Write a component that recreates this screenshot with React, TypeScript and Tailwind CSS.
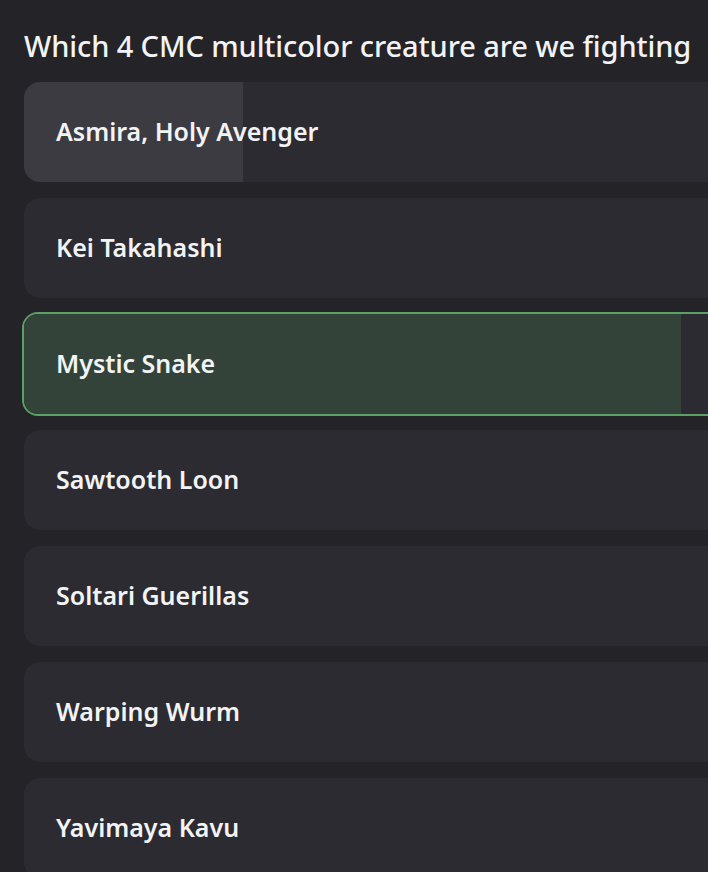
const options = [
  { name: "Asmira, Holy Avenger", fill: 219, selected: false },
  { name: "Kei Takahashi", fill: 0, selected: false },
  { name: "Mystic Snake", fill: 657, selected: true },
  { name: "Sawtooth Loon", fill: 0, selected: false },
  { name: "Soltari Guerillas", fill: 0, selected: false },
  { name: "Warping Wurm", fill: 0, selected: false },
  { name: "Yavimaya Kavu", fill: 0, selected: false },
];

export default function App() {
  return (
    <div className="w-[708px] h-[872px] overflow-hidden bg-[#232328] pl-6 pt-[26px]" style={{ fontFamily: '"Noto Sans", "Open Sans", sans-serif' }}>
      <h1 className="text-[29px] leading-[40px] font-medium text-[#f2f3f5] tracking-[-0.1px] whitespace-nowrap mb-4">
        Which 4 CMC multicolor creature are we fighting
      </h1>

      <div className="flex flex-col gap-4 w-[760px]">
        {options.map((o) => (
          <div
            key={o.name}
            className={`relative rounded-2xl overflow-hidden bg-[#2b2b31] ${o.selected ? "h-[104px] -my-[2px] -ml-[2px] border-2 border-[#5ba065]" : "h-[100px]"}`}
          >
            {o.fill > 0 && (
              <div
                className={`absolute left-0 top-0 bottom-0 ${o.selected ? "bg-[#33433a]" : "bg-[#3b3b41]"}`}
                style={{ width: o.fill }}
              />
            )}
            <div className="relative h-full flex items-center pl-8">
              <span className="text-[25px] font-semibold text-[#f2f3f5] whitespace-nowrap">{o.name}</span>
            </div>
          </div>
        ))}
      </div>
    </div>
  );
}
